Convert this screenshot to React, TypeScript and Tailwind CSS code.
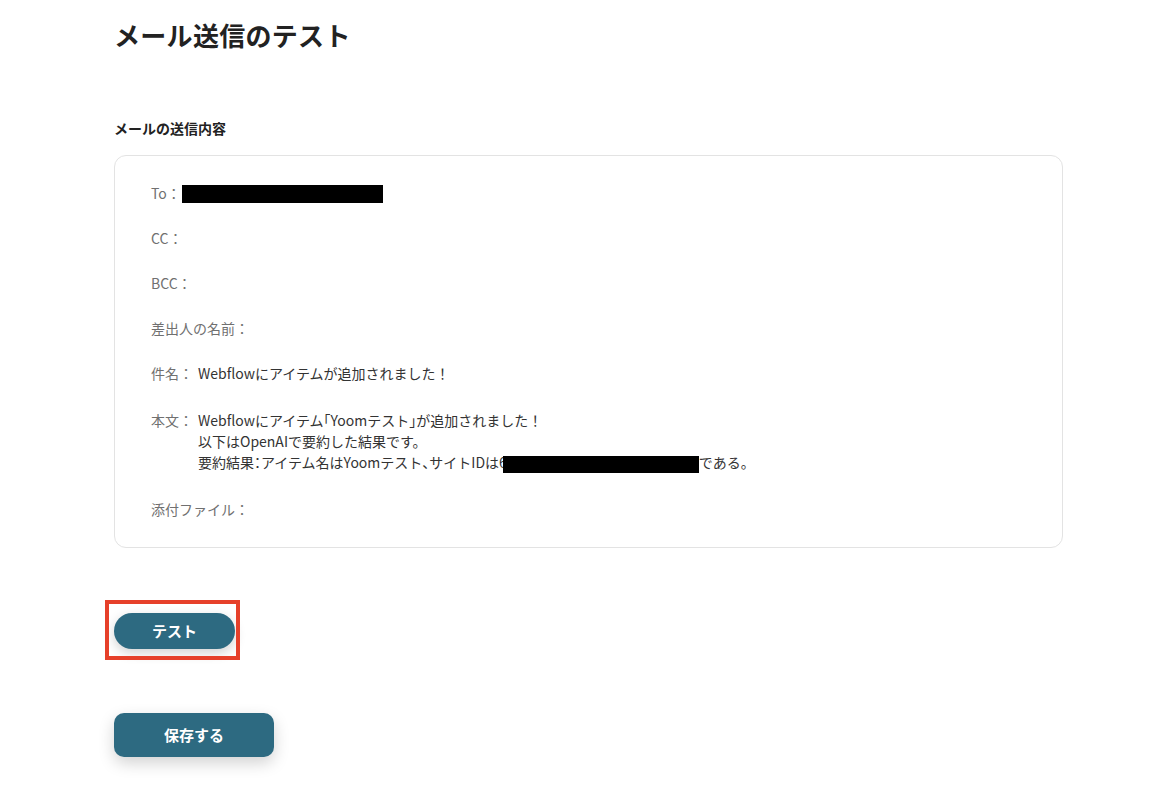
import { FC, ReactNode } from 'react'

const font = { fontFamily: '"Noto Sans CJK JP", "Noto Sans", sans-serif' }

const Row: FC<{ label: string; children?: ReactNode; className?: string; gap?: string }> = ({
  label,
  children,
  className,
  gap,
}) => (
  <div className={`flex text-[14px] leading-[21px] ${className ?? ''}`}>
    <span className={`text-[#707070] shrink-0 ${gap ?? 'mr-[5px]'}`}>{label}</span>
    <div className="text-[#333]">{children}</div>
  </div>
)

// narrow punctuation like the reference
const H: FC<{ children: ReactNode }> = ({ children }) => (
  <span className="[font-feature-settings:'halt']">{children}</span>
)

const App: FC = () => (
  <div className="min-h-[804px] bg-white pl-[114px] pt-[16px]" style={font}>
    <h1 className="text-[26px] font-bold leading-[38px] text-[#222] tracking-[0.3px]">メール送信のテスト</h1>

    <h2 className="mt-[64px] text-[14px] font-bold leading-[21px] text-[#222]">メールの送信内容</h2>

    <div className="mt-[16px] w-[949px] rounded-[12px] border border-[#e3e3e3] px-[36px] pt-[27px] pb-[27px]">
      <div className="flex flex-col gap-[24px]">
        <Row label="To：" gap="mr-[1px]">
          <span className="inline-block h-[18px] w-[201px] translate-y-[-1px] bg-black align-middle" />
        </Row>
        <Row label="CC：" />
        <Row label="BCC：" />
        <Row label="差出人の名前：" />
        <Row label="件名：">Webflowにアイテムが追加されました！</Row>
        <Row label="本文：" className="mt-[2px] leading-[21.5px]">
          <div>
            Webflowにアイテム<H>「</H>Yoomテスト<H>」</H>が追加されました！
          </div>
          <div>以下はOpenAIで要約した結果です。</div>
          <div>
            要約結果<H>：</H>アイテム名はYoomテスト<H>、</H>サイトIDは6
            <span className="-ml-[4px] inline-block h-[17px] w-[196px] bg-black align-middle" />
            である。
          </div>
        </Row>
        <Row label="添付ファイル：" className="mt-[2px]" />
      </div>
    </div>

    <div className="relative mt-[65px] inline-block">
      <button className="h-[36px] w-[121px] rounded-full bg-[#2d6a81] text-[15px] font-bold text-white shadow-[0_4px_12px_rgba(0,0,0,0.18)]">
        テスト
      </button>
      <div className="pointer-events-none absolute left-[-9px] top-[-13px] h-[60px] w-[135px] border-4 border-[#e6402a]" />
    </div>

    <div className="mt-[64px]">
      <button className="h-[44px] w-[160px] rounded-[10px] bg-[#2d6a81] text-[15px] font-bold text-white shadow-[0_6px_16px_rgba(0,0,0,0.18)]">
        保存する
      </button>
    </div>
  </div>
)

export default App
